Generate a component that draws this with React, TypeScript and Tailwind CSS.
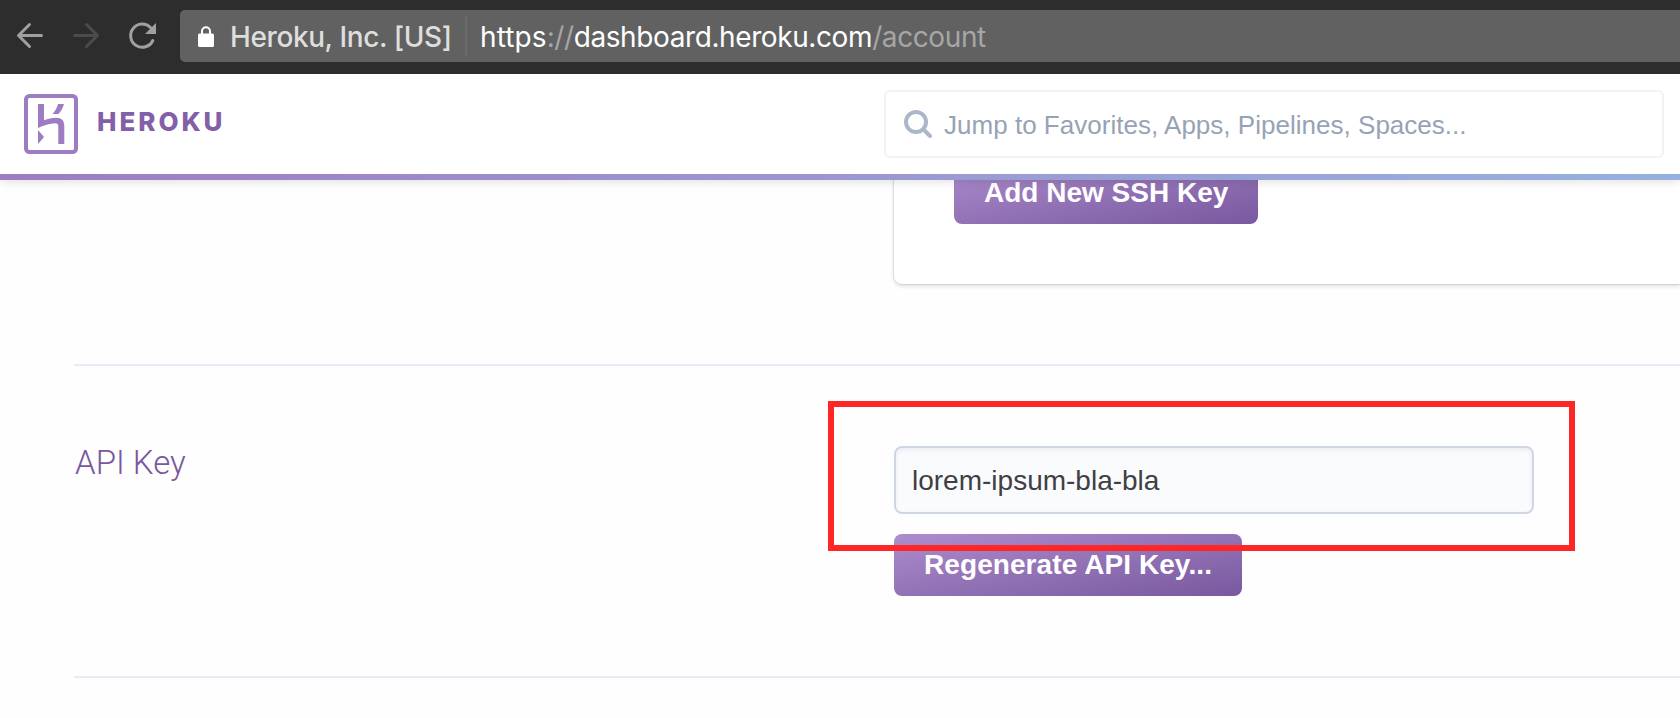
import type { ReactNode } from 'react'

const helvetica = "font-['Liberation_Sans',Arial,sans-serif]"

function BrowserBar() {
    return (
        <div className="relative z-20 flex h-[74px] shrink-0 items-start bg-[#2d2d2d] pt-[10px] font-['Inter',sans-serif]">
            <svg className="h-[52px] w-[180px] shrink-0" viewBox="0 0 180 52" fill="none" strokeWidth="3" strokeLinecap="round" strokeLinejoin="round">
                <path stroke="#a0a0a0" d="M41.5 25.5H18.5M29.5 14.5L18.5 25.5L29.5 36.5" />
                <path stroke="#4b4b4b" d="M74.5 25.5H97.5M86.5 14.5L97.5 25.5L86.5 36.5" />
                <path stroke="#a0a0a0" d="M150.5 17.5A11.6 11.6 0 1 0 152.8 30.5" />
                <path fill="#a0a0a0" d="M156 13V24H145Z" />
            </svg>
            <div className="flex h-[52px] flex-1 items-center rounded-l-[5px] bg-[#616161] text-[28px] whitespace-nowrap">
                <svg className="ml-[18px] h-[21px] w-4 shrink-0" viewBox="0 0 16 21">
                    <path fill="none" stroke="#fff" strokeWidth="2" d="M4 9V5.2a4 4 0 0 1 8 0V9" />
                    <rect y="7.5" width="16" height="13.5" rx="1.5" fill="#fff" />
                </svg>
                <span className="mt-[2px] ml-4 w-[235px] font-medium tracking-[-0.4px] text-[#dedede]">Heroku, Inc. [US]</span>
                <span className="h-10 w-[2px] bg-[#6b6b6b]" />
                <span className="mt-[2px] ml-[13px] tracking-[-0.4px] text-[#a6a6a6]">
                    <span className="tracking-[0.1px] text-white">https</span>://<span className="text-white">dashboard.heroku.com</span>/account
                </span>
            </div>
        </div>
    )
}

function Header() {
    return (
        <header className="relative z-10 shrink-0 bg-white shadow-[0_1px_10px_rgba(0,0,0,0.14)]">
            <div className="flex h-[100px] items-center justify-between pr-4 pl-6">
                <div className="flex items-center">
                    <svg className="h-[60px] w-[54px]" viewBox="0 0 54 60" fill="#9e7cc1">
                        <rect x="2" y="2" width="50" height="56" rx="3.5" fill="none" stroke="#9e7cc1" strokeWidth="4" />
                        <path d="M14 10H20V26.3C24 24.7 28 23.7 32 23.7C38 23.7 40.3 27 40.3 32V50H34.3V33C34.3 30.5 33.5 29.3 31.5 29.3C26 29.3 19 31.5 14 34Z" />
                        <path d="M34 10H40C39 14 37 17 34.5 20H28.5C31 17 33 14 34 10ZM14 36L20 43L14 50Z" />
                    </svg>
                    <span className="mt-[-5px] ml-[19px] font-['Inter',sans-serif] text-[26px] font-extrabold tracking-[2.95px] text-[#845fa9]">HEROKU</span>
                </div>
                <div className="flex h-[68px] w-[780px] items-center rounded-[6px] border-2 border-[#f2f2f2] pl-[18px]">
                    <svg className="h-7 w-7" viewBox="0 0 28 28" fill="none" stroke="#acb7ca">
                        <circle cx="12" cy="12" r="10" strokeWidth="4" />
                        <path d="M19.5 19.5L26 26" strokeWidth="4" strokeLinecap="round" />
                    </svg>
                    <span className={`mt-[2px] ml-3 text-[26px] tracking-[0.02px] text-[#96a3b6] ${helvetica}`}>Jump to Favorites, Apps, Pipelines, Spaces...</span>
                </div>
            </div>
            <div className="h-[6px] bg-linear-to-r from-[#9e7cc1] to-[#96b1df]" />
        </header>
    )
}

function PurpleButton({ children }: { children: ReactNode }) {
    return (
        <button className={`h-[62px] rounded-[8px] bg-linear-to-br from-[#ad8dcd] to-[#79589f] px-[30px] text-[28px] font-bold whitespace-nowrap text-white ${helvetica}`}>
            {children}
        </button>
    )
}

export default function App() {
    return (
        <div className="flex h-[718px] w-[1680px] flex-col overflow-hidden bg-[#fefefe]">
            <BrowserBar />
            <Header />
            {/* page is scrolled, so the top slides under the header */}
            <main className="-mt-[18px] ml-[74px] flex flex-col">
                <section className="flex h-[204px] items-start border-b-2 border-[#e8eaf5]">
                    <div className="ml-[820px] h-[122px] flex-1 rounded-bl-[8px] bg-white pl-[60px] shadow-[0_0_0_1px_rgba(0,0,0,0.07),0_2px_4px_rgba(0,0,0,0.14)]">
                        <PurpleButton>Add New SSH Key</PurpleButton>
                    </div>
                </section>
                <section className="flex h-[312px] items-start border-b-2 border-[#e8eaf5] pt-20">
                    <h2 className="mt-px w-[820px] pl-px font-['Roboto',sans-serif] text-[33px] leading-[32px] font-light text-[#79589f]">API Key</h2>
                    <div className="relative flex flex-col items-start gap-5">
                        <input
                            readOnly
                            value="lorem-ipsum-bla-bla"
                            className={`h-[68px] w-[640px] rounded-[8px] border-2 border-[#cfd7e6] bg-[#fafbfd] px-4 pt-[2px] text-[28px] text-[#3f3f44] shadow-[inset_0_2px_4px_rgba(207,215,230,0.4)] ${helvetica}`}
                        />
                        <PurpleButton><span className="tracking-[0.08px]">Regenerate API Key...</span></PurpleButton>
                        <div className="pointer-events-none absolute -top-[45px] -left-[66px] h-[150px] w-[747px] border-6 border-[#ff2626]" />
                    </div>
                </section>
            </main>
        </div>
    )
}
